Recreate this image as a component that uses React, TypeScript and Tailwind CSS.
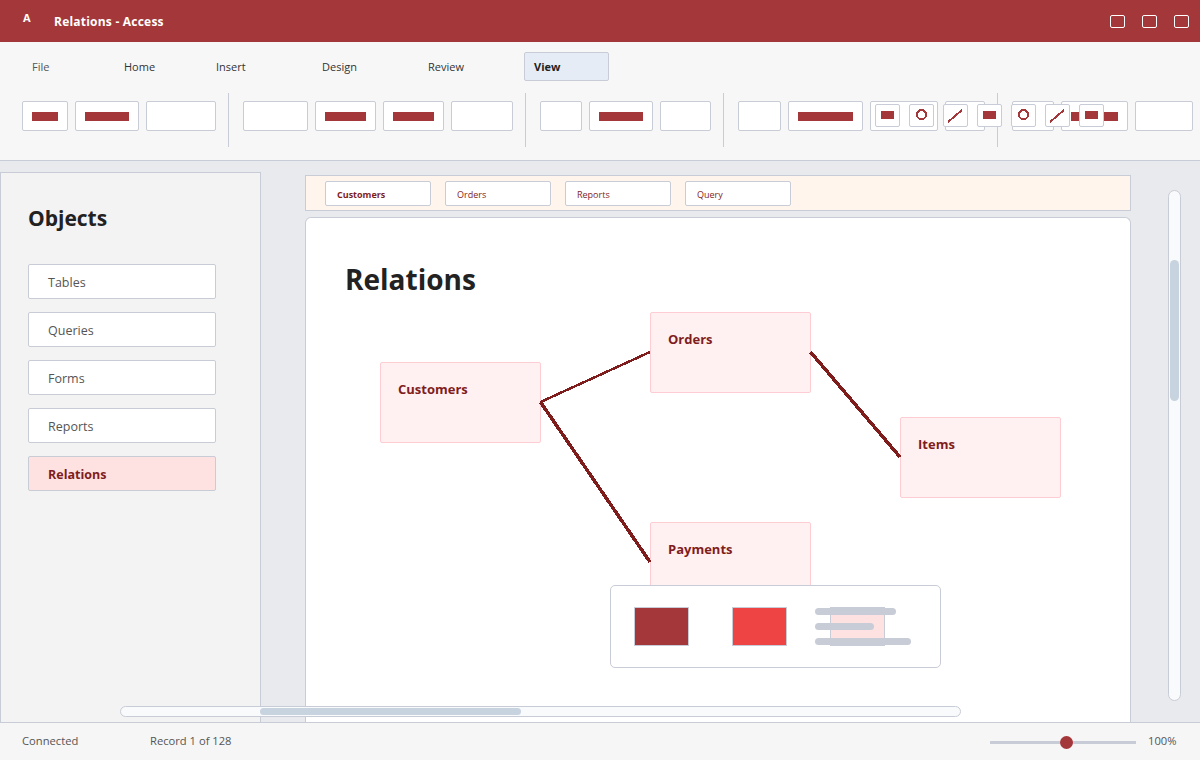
const tabs = [
  { label: "File", w: "w-[71px]", cls: "text-[#555]" },
  { label: "Home", w: "w-[71px]", cls: "text-[#333]" },
  { label: "Insert", w: "w-[85px]", cls: "text-[#333]" },
  { label: "Design", w: "w-[85px]", cls: "text-[#333]" },
  { label: "Review", w: "w-[85px]", cls: "text-[#333]" },
];

const objects = ["Tables", "Queries", "Forms", "Reports"];
const docTabs = ["Orders", "Reports", "Query"];

const RibbonBtn = ({ w, bar }: { w: string; bar?: string }) => (
  <div className={`${w} h-[30px] shrink-0 bg-white border border-[#c8ccd6] rounded-[2px] flex items-center justify-center`}>
    {bar && <div className={`${bar} h-[9px] bg-[#a4373a]`} />}
  </div>
);

const Sep = () => <div className="w-px h-[54px] bg-[#c8ccd6] shrink-0 ml-[5px] mr-[7px] -mt-[8px] self-start" />;

const Tool = ({ kind }: { kind: "rect" | "circle" | "line" }) => (
  <div className="w-[25px] h-[23px] shrink-0 bg-white border border-[#c8ccd6] rounded-[2px] flex items-center justify-center">
    <svg width="23" height="21" viewBox="0 0 23 21" shapeRendering="crispEdges">
      {kind === "rect" && <rect x="5" y="6" width="13" height="8" fill="#a4373a" />}
      {kind === "circle" && <circle cx="11.5" cy="9.5" r="4.5" fill="none" stroke="#a4373a" strokeWidth="2" />}
      {kind === "line" && <line x1="4" y1="17" x2="18" y2="5" stroke="#a4373a" strokeWidth="2" />}
    </svg>
  </div>
);

const Node = ({ label, pos }: { label: string; pos: string }) => (
  <div className={`absolute ${pos} w-[161px] h-[81px] bg-[#fff1f2] border border-[#fecdd3] rounded-[2px] px-[17px] py-[17px] text-[13px] font-bold leading-[18px] text-[#7f1d1d]`}>
    {label}
  </div>
);

export default function App() {
  return (
    <div
      className="relative w-[1200px] h-[760px] overflow-hidden flex flex-col bg-[#e9eaee]"
      style={{ fontFamily: '"Open Sans", "Noto Sans", sans-serif' }}
    >
      {/* title bar */}
      <div className="h-[42px] shrink-0 bg-[#a4373a] flex items-center text-white pl-[23px] pr-[11px]">
        <span className="w-[31px] text-[11px] font-bold -mt-[6px]">A</span>
        <span className="text-[12px] font-bold tracking-[0.22px] pt-[2px]">Relations - Access</span>
        <div className="ml-auto flex gap-[17px]">
          <div className="w-[15px] h-[13px] border border-white rounded-[2px]" />
          <div className="w-[15px] h-[13px] border border-white rounded-[2px]" />
          <div className="w-[15px] h-[13px] border border-white rounded-[2px]" />
        </div>
      </div>

      {/* ribbon */}
      <div className="h-[119px] shrink-0 bg-[#f7f7f7] border-b border-[#c8ccd6] px-[22px] pt-[10px]">
        <div className="flex gap-[21px] h-[29px] items-center text-[11px]">
          {tabs.map(t => (
            <div key={t.label} className={`${t.w} px-[10px] pt-[2px] ${t.cls}`}>{t.label}</div>
          ))}
          <div className="w-[85px] h-[29px] bg-[#e6ecf6] border border-[#c8ccd6] rounded-[2px] px-[9px] pt-[2px] flex items-center font-bold text-[#222]">View</div>
        </div>
        <div className="flex mt-[20px] gap-[7px]">
          <RibbonBtn w="w-[46px]" bar="w-[26px]" />
          <RibbonBtn w="w-[64px]" bar="w-[44px]" />
          <RibbonBtn w="w-[70px]" />
          <Sep />
          <RibbonBtn w="w-[65px]" />
          <RibbonBtn w="w-[61px]" bar="w-[41px]" />
          <RibbonBtn w="w-[61px]" bar="w-[41px]" />
          <RibbonBtn w="w-[62px]" />
          <Sep />
          <RibbonBtn w="w-[42px]" />
          <RibbonBtn w="w-[64px]" bar="w-[44px]" />
          <RibbonBtn w="w-[51px]" />
          <Sep />
          <RibbonBtn w="w-[43px]" />
          <RibbonBtn w="w-[75px]" bar="w-[55px]" />
          <div className="relative w-[68px] h-[30px] shrink-0 bg-white border border-[#c8ccd6] rounded-[2px]">
            <div className="absolute left-[4px] top-[2px] flex gap-[9px] z-10">
              <Tool kind="rect" />
              <Tool kind="circle" />
              <Tool kind="line" />
              <Tool kind="rect" />
              <Tool kind="circle" />
              <Tool kind="line" />
              <Tool kind="rect" />
            </div>
          </div>
          <RibbonBtn w="w-[40px]" />
          <Sep />
          <RibbonBtn w="w-[42px]" />
          <RibbonBtn w="w-[67px]" bar="w-[47px]" />
          <RibbonBtn w="w-[58px]" />
        </div>
      </div>

      {/* main */}
      <div className="relative flex-1 min-h-0 flex overflow-hidden">
        <aside className="w-[261px] shrink-0 mt-[11px] bg-[#f3f3f4] border border-b-0 border-[#c8ccd6] pl-[27px] pt-[31px]">
          <h2 className="text-[21px] font-bold leading-[28px] text-[#222]">Objects</h2>
          <div className="mt-[32px] flex flex-col gap-[13px]">
            {objects.map(o => (
              <div key={o} className="w-[188px] h-[35px] bg-white border border-[#c8ccd6] rounded-[2px] pl-[19px] pt-[3px] flex items-center text-[12.5px] text-[#555]">{o}</div>
            ))}
            <div className="w-[188px] h-[35px] bg-[#fee2e2] border border-[#c8ccd6] rounded-[2px] pl-[19px] pt-[3px] flex items-center text-[12.5px] font-bold text-[#7f1d1d]">Relations</div>
          </div>
        </aside>

        <div className="w-[826px] shrink-0 ml-[44px] mt-[14px] flex flex-col gap-[6px]">
          <div className="h-[36px] shrink-0 bg-[#fff5ec] border border-[#c8ccd6] pl-[19px] pt-[5px] flex gap-[14px] items-start">
            <div className="w-[106px] h-[25px] bg-white border border-[#c8ccd6] rounded-[2px] px-[11px] pt-[2px] flex items-center text-[9px] font-bold text-[#7f1d1d]">Customers</div>
            {docTabs.map(t => (
              <div key={t} className="w-[106px] h-[25px] bg-white border border-[#c8ccd6] rounded-[2px] px-[11px] pt-[2px] flex items-center text-[9px] text-[#7f1d1d]">{t}</div>
            ))}
          </div>

          <div className="relative flex-1 bg-white border border-b-0 border-[#c8ccd6] rounded-t-[6px]">
            <h1 className="absolute left-[39px] top-[42px] text-[28px] font-bold leading-[38px] text-[#222]">Relations</h1>
            <Node label="Customers" pos="left-[74px] top-[144px]" />
            <Node label="Orders" pos="left-[344px] top-[94px]" />
            <Node label="Items" pos="left-[594px] top-[199px]" />
            <Node label="Payments" pos="left-[344px] top-[304px]" />
            <svg className="absolute left-0 top-0" width="824" height="504" shapeRendering="crispEdges">
              <line x1="234.5" y1="184" x2="344" y2="134" stroke="#7f1d1d" strokeWidth="2.5" />
              <line x1="504.5" y1="134" x2="594" y2="239" stroke="#7f1d1d" strokeWidth="3.5" />
              <line x1="234.5" y1="184" x2="344" y2="344" stroke="#7f1d1d" strokeWidth="3.5" />
            </svg>

            {/* legend */}
            <div className="absolute left-[304px] top-[367px] w-[331px] h-[83px] bg-white border border-[#c8ccd6] rounded-[5px] pl-[23px] pt-[21px]">
              <div className="flex gap-[43px]">
                <div className="w-[55px] h-[39px] bg-[#a4373a] border border-[#c8ccd6]" />
                <div className="w-[55px] h-[39px] bg-[#ef4444] border border-[#c8ccd6]" />
                <div className="w-[55px] h-[39px] bg-[#fee2e2] border border-[#c8ccd6]" />
              </div>
              <div className="absolute left-[204px] top-[22px] w-[96px] flex flex-col gap-[8px]">
                <div className="w-[81px] h-[7px] rounded-full bg-[#c8ccd6]" />
                <div className="w-[59px] h-[7px] rounded-full bg-[#c8ccd6]" />
                <div className="w-[96px] h-[7px] rounded-full bg-[#c8ccd6]" />
              </div>
            </div>
          </div>
        </div>

        {/* vertical scrollbar */}
        <div className="absolute left-[1168px] top-[29px] w-[13px] h-[511px] bg-[#f9fafb] border border-[#c8ccd6] rounded-full">
          <div className="absolute left-[1px] top-[69px] w-[9px] h-[141px] rounded-full bg-[#c8d3e0]" />
        </div>
        {/* horizontal scrollbar */}
        <div className="absolute left-[120px] top-[545px] w-[841px] h-[11px] bg-[#f9fafb] border border-[#c8ccd6] rounded-full">
          <div className="absolute left-[139px] top-[1px] w-[261px] h-[7px] rounded-full bg-[#c8d3e0]" />
        </div>
      </div>

      {/* status bar */}
      <div className="h-[38px] shrink-0 bg-[#f6f6f6] border-t border-[#c8ccd6] pl-[22px] flex items-center text-[11.2px] text-[#555]">
        <span className="w-[128px]">Connected</span>
        <span>Record 1 of 128</span>
        <div className="relative ml-auto mr-[12px] w-[146px] h-[3px] bg-[#c8ccd6] mt-[2px]">
          <div className="absolute left-[70px] -top-[5px] w-[13px] h-[13px] rounded-full bg-[#a4373a]" />
        </div>
        <span className="w-[52px]">100%</span>
      </div>
    </div>
  );
}
